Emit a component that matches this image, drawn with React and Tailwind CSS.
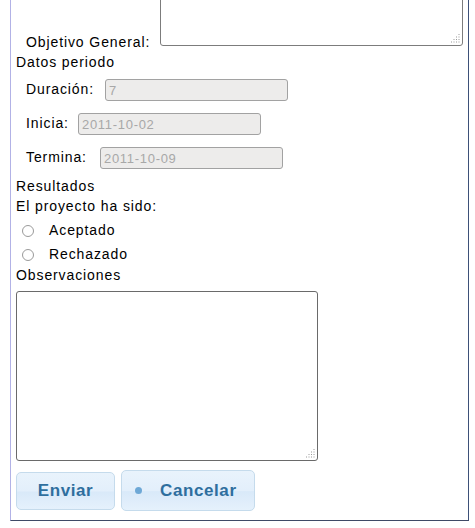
import React from "react";

function Grip() {
  const dots = [];
  for (let i = 0; i < 4; i++) {
    for (let j = 0; j < 4; j++) {
      if (i + j >= 3) dots.push(<rect key={i + "-" + j} x={1 + i * 2.5} y={1 + j * 2.5} width="1" height="1" fill="#9a9a9a" />);
    }
  }
  return (
    <svg className="absolute right-[2px] bottom-[2px]" width="11" height="11" viewBox="0 0 11 11">
      {dots}
    </svg>
  );
}

function Field({ label, labelW, value }) {
  return (
    <div className="flex items-start h-[22px]">
      <span className="pl-[10px] leading-[20px]" style={{ width: labelW }}>
        {label}
      </span>
      <input
        readOnly
        value={value}
        className="w-[183px] h-[22px] border border-[#a2a2a2] rounded-[3px] bg-[#edeceb] text-[13px] text-[#a8a8a8] px-[3px] tracking-[0.7px] font-['Liberation_Sans',Arial,sans-serif] outline-none"
      />
    </div>
  );
}

function Radio({ label }) {
  return (
    <div className="flex items-center h-[20px]">
      <span className="ml-[6px] mt-[2px] w-[12px] h-[12px] rounded-full border border-[#9a9a9a] bg-white shrink-0" />
      <span className="ml-[15px] leading-[20px]">{label}</span>
    </div>
  );
}

export default function App() {
  return (
    <div className="w-[475px] h-[528px] bg-white overflow-hidden font-['Liberation_Sans',Arial,sans-serif] text-[14px] tracking-[0.9px] text-black">
      <div className="ml-[10px] w-[459px] h-[521px] border-l border-l-[#b2b2e6] border-r border-r-[#3d5078] border-b border-b-[#3f4a66] pl-[5px]">
        <div className="flex items-end h-[52px]">
          <span className="w-[144px] pl-[10px] leading-[20px] shrink-0">Objetivo General:</span>
          <div className="relative w-[303px] h-[90px] mb-[6px] shrink-0">
            <textarea className="block w-full h-full border border-[#7c7c7c] rounded-[3px] bg-white resize-none outline-none" />
            <Grip />
          </div>
        </div>
        <div className="leading-[20px] h-[20px]">Datos periodo</div>
        <div className="mt-[7px] flex flex-col gap-[12px]">
          <Field label="Duración:" labelW={89} value="7" />
          <Field label="Inicia:" labelW={62} value="2011-10-02" />
          <Field label="Termina:" labelW={84} value="2011-10-09" />
        </div>
        <div className="mt-[7px] leading-[20px]">Resultados</div>
        <div className="leading-[20px]">El proyecto ha sido:</div>
        <div className="mt-[4px]">
          <Radio label="Aceptado" />
        </div>
        <div className="mt-[4px]">
          <Radio label="Rechazado" />
        </div>
        <div className="mt-[1px] leading-[20px]">Observaciones</div>
        <div className="relative mt-[6px] w-[302px] h-[170px]">
          <textarea className="block w-full h-full border border-[#6a6a6a] rounded-[3px] bg-white resize-none outline-none" />
          <Grip />
        </div>
        <div className="mt-[9px] flex items-center gap-[6px]">
          <button className="w-[99px] h-[38px] border border-[#c5dbec] rounded-[5px] bg-[linear-gradient(to_bottom,#e9f3fc_0%,#e3effb_50%,#d9e9f9_53%,#e5f1fc_100%)] text-[#2e6e9e] font-bold text-[17px] tracking-[0.6px] flex items-center justify-center">
            Enviar
          </button>
          <button className="w-[134px] h-[41px] border border-[#c5dbec] rounded-[5px] bg-[linear-gradient(to_bottom,#e9f3fc_0%,#e3effb_50%,#d9e9f9_53%,#e5f1fc_100%)] text-[#2e6e9e] font-bold text-[17px] tracking-[0.6px] flex items-center pl-[13px]">
            <span className="w-[7px] h-[7px] rounded-full bg-[#6ea8d6] shrink-0" />
            <span className="ml-[18px]">Cancelar</span>
          </button>
        </div>
      </div>
    </div>
  );
}
